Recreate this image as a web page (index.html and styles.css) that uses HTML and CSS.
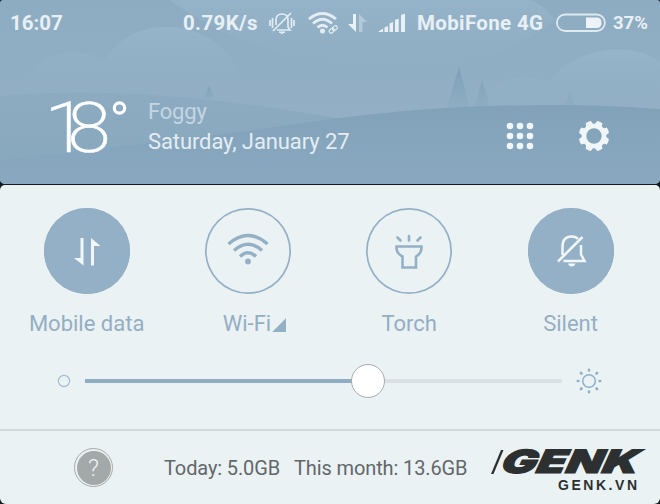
FILE: index.html
```html
<!DOCTYPE html>
<html lang="en">
<head>
<meta charset="utf-8">
<title>Notification shade</title>
<link rel="stylesheet" href="styles.css">
</head>
<body>
<main class="shade">
  <header class="weather">
    <svg class="scene" viewBox="0 0 660 184" preserveAspectRatio="none" aria-hidden="true">
      <defs>
        <linearGradient id="sky" x1="0" y1="0" x2="0" y2="1"><stop offset="0" stop-color="#8dacc1"/><stop offset=".6" stop-color="#92afc5"/></linearGradient>
        <linearGradient id="hill" x1="0" y1="0" x2="0" y2="1"><stop offset="0" stop-color="#81a2b9"/><stop offset="1" stop-color="#8aa9c0"/></linearGradient>
        <linearGradient id="far" x1="0" y1="0" x2="0" y2="1"><stop offset="0" stop-color="#8cabc1"/><stop offset="1" stop-color="#88a8be"/></linearGradient>
        <linearGradient id="cloud" x1="0" y1="0" x2="0" y2="1"><stop offset="0" stop-color="#9ab9ce" stop-opacity=".6"/><stop offset="1" stop-color="#94b1c7" stop-opacity="0"/></linearGradient>
        <linearGradient id="tree" x1="0" y1="0" x2="0" y2="1"><stop offset="0" stop-color="#7c9fb7"/><stop offset="1" stop-color="#8aaac0" stop-opacity=".5"/></linearGradient>
      </defs>
      <rect width="660" height="184" fill="url(#sky)"/>
      <path d="M170 0H530Q545 6 555 20Q490 70 390 75Q250 60 170 0Z" fill="url(#cloud)"/>
      <path d="M28 82C38 48 82 47 105 61C120 34 145 27 168 27C205 27 235 50 246 92Z" fill="url(#cloud)"/>
      <path d="M480 105C489 76 528 71 549 83C568 51 628 37 660 62V108Z" fill="url(#cloud)"/>
      <path d="M209 86L214 98H204Z" fill="url(#tree)"/>
      <path d="M0 96C110 86 230 99 350 120V184H0Z" fill="url(#far)"/>
      <path d="M459 67Q465 86 469 107H447Q453 86 459 67ZM482 80Q487 94 490 107H475Q478 92 482 80ZM570 92L575 106H565Z" fill="url(#tree)"/>
      <path d="M90 150C210 137 280 126 340 118C440 105 560 101 660 109V184H0V160Z" fill="url(#hill)"/>
    </svg>

    <div class="status">
      <span class="clock">16:07</span>
      <span class="speed">0.79K/s</span>
      <svg class="st-bell" width="26" height="24" viewBox="0 0 26 24" fill="none" stroke="#e4edf3" stroke-width="1.700">
        <path d="M1 9V15M3.500 7V17M22.500 7V17M25 9V15M7 14V9Q7 3 13 3Q19 3 19 9V16L21 19H8M4 20L22 2"/><path d="M10 21H16L13 22.500Z" fill="#e4edf3" stroke-width="1"/>
      </svg>
      <svg class="st-wifi" width="31" height="24" viewBox="0 0 31 24" fill="none" stroke="#e4edf3" stroke-width="2.900">
        <path d="M1 8Q14.500 -3 28 8M5 12.500Q14.500 4 24 12.500M9.500 16.500Q14.500 12 19.500 16.500"/><circle cx="14.500" cy="20" r="2.500" fill="#e4edf3" stroke="none"/>
        <g stroke-width="1.200" transform="translate(0 .5) rotate(-40 25 18)"><rect x="20.500" y="16.200" width="5.500" height="3.800" rx="1.900"/><rect x="24.500" y="16.200" width="5.500" height="3.800" rx="1.900"/></g>
      </svg>
      <svg class="st-data" width="20" height="20" viewBox="0 0 20 20"><path d="M8 1V19L0 11H5V1Z" fill="#e9f1f5"/><path d="M11 19V1L19 9H14.500V19Z" fill="#b5cad9"/></svg>
      <svg class="st-signal" width="28" height="20" viewBox="0 0 28 20" fill="#e9f1f5"><path d="M0 19L5 15.500V19ZM6.500 14.500L10 13V19H6.500ZM11.500 10.500L15 9V19H11.500ZM17 7L20.700 5.500V19H17ZM23 2L27 .5V19H23Z"/></svg>
      <span class="carrier">MobiFone 4G</span>
      <svg class="st-battery" width="50" height="20" viewBox="0 0 50 20"><rect x="0" y="1.500" width="48" height="16.500" rx="8.250" transform="translate(.9 0)" fill="none" stroke="#dfe9f0" stroke-width="1.800"/><path d="M30 4.500H40.500Q45.500 4.500 45.500 9.750Q45.500 15 40.500 15H30Z" fill="#edf3f7"/></svg>
      <span class="percent">37%</span>
    </div>

    <div class="forecast">
      <svg class="temp" width="82" height="84" viewBox="0 -10 82 84"><text class="temp-text" transform="translate(-2.500 56) scale(1.120 1)">18</text><circle cx="72.500" cy="12" r="5.200" fill="none" stroke="#fff" stroke-width="3.200"/></svg>
      <div class="when"><span class="condition">Foggy</span><span class="date">Saturday, January 27</span></div>
      <svg class="apps" width="28" height="28" viewBox="0 0 28 28" fill="#f0f5f8"><circle cx="4" cy="4" r="3.300"/><circle cx="14" cy="4" r="3.300"/><circle cx="24" cy="4" r="3.300"/><circle cx="4" cy="14" r="3.300"/><circle cx="14" cy="14" r="3.300"/><circle cx="24" cy="14" r="3.300"/><circle cx="4" cy="24" r="3.300"/><circle cx="14" cy="24" r="3.300"/><circle cx="24" cy="24" r="3.300"/></svg>
      <svg class="gear" width="32" height="32" viewBox="-16 -16 32 32" fill="#f0f5f8"><circle r="10" fill="none" stroke="#f0f5f8" stroke-width="4.600"/><path id="tooth" d="M-4.500 -10.500Q-3.100 -12 -2.900 -15Q0 -15.800 2.900 -15Q3.100 -12 4.500 -10.500Z" transform="rotate(22.500)"/><use href="#tooth" transform="rotate(45)"/><use href="#tooth" transform="rotate(90)"/><use href="#tooth" transform="rotate(135)"/><use href="#tooth" transform="rotate(180)"/><use href="#tooth" transform="rotate(225)"/><use href="#tooth" transform="rotate(270)"/><use href="#tooth" transform="rotate(315)"/></svg>
    </div>
  </header>

  <section class="panel">
    <div class="toggles">
      <div class="toggle">
        <span class="disc on"><svg width="86" height="86" viewBox="0 0 86 86" fill="#f1f7f9"><path d="M39.500 30V57.500L30 50H36.500V30ZM47 57.500V30L56.500 38H50V57.500Z"/></svg></span>
        <span class="label">Mobile data</span>
      </div>
      <div class="toggle">
        <span class="disc"><svg width="86" height="86" viewBox="0 0 86 86" fill="none" stroke="#94b0c6" stroke-width="3.400"><path d="M23.500 36Q43 19 62.500 36M29 42.500Q43 30 57 42.500M35 48.500Q43 41 51 48.500"/><circle cx="43" cy="53.500" r="2.900" fill="#94b0c6" stroke="none"/></svg></span>
        <span class="label wifi">Wi-Fi<i class="corner"></i></span>
      </div>
      <div class="toggle">
        <span class="disc"><svg width="86" height="86" viewBox="0 0 86 86" fill="none" stroke="#94b0c6" stroke-width="2.600"><path d="M30.500 38.500H55.500Q56 45 50 48.500V59.500H36.500V48.500Q30 45 30.500 38.500Z"/><path stroke-linecap="round" d="M43 28V32.500M31.500 29.500L34.500 32.500M54.500 29.500L51.500 32.500"/></svg></span>
        <span class="label">Torch</span>
      </div>
      <div class="toggle">
        <span class="disc on"><svg width="86" height="86" viewBox="0 0 86 86" fill="none" stroke="#f1f7f9" stroke-width="2.500"><path d="M34.500 47V39Q34.500 28.500 43.500 28.500Q48 28.500 50 31M53 37V46.500L56.500 53H35.500M30 53.500L54.500 29"/><path d="M40 55.500H47.500Q46.500 58.500 43.750 58.500Q41 58.500 40 55.500Z" fill="#f1f7f9" stroke="none"/></svg></span>
        <span class="label">Silent</span>
      </div>
    </div>

    <div class="brightness">
      <svg width="14" height="14" viewBox="0 0 14 14"><circle cx="7" cy="7" r="5.600" fill="none" stroke="#a4bbd0" stroke-width="1.200"/></svg>
      <div class="track"><div class="filled"></div><div class="knob"></div></div>
      <svg width="26" height="26" viewBox="0 0 26 26" fill="none" stroke="#8fb0c9" stroke-width="1.500"><circle cx="13" cy="13" r="6.300"/><path stroke-width="2.600" stroke-linecap="round" d="M13 1.800V2.400M13 23.600V24.200M1.800 13H2.400M23.600 13H24.200M4.900 4.900L5.500 5.500M20.500 20.500L21.100 21.100M4.900 21.100L5.500 20.500M20.500 5.500L21.100 4.900"/></svg>
    </div>

    <footer class="usage">
      <span class="help"><span class="help-inner">?</span></span>
      <span class="today">Today: 5.0GB</span>
      <span class="month">This month: 13.6GB</span>
      <svg class="logo" width="158" height="52" viewBox="0 0 158 52" fill="#2d3031">
        <path d="M2 32L12 8H14.500L4.500 32Z"/>
        <text class="brand" transform="translate(11 31) skewX(-12)" textLength="137" lengthAdjust="spacingAndGlyphs">GENK</text>
        <text class="domain" x="69" y="47.500" textLength="79">GENK.VN</text>
      </svg>
    </footer>
  </section>
</main>
</body>
</html>
```
FILE: styles.css
```css
* { box-sizing: border-box; }
body { margin: 0; background: #111a20; font-family: Roboto, "Liberation Sans", sans-serif; }
svg { display: block; flex: none; }
.shade { width: 660px; height: 504px; display: flex; flex-direction: column; gap: 1px; overflow: hidden; }
.weather { position: relative; height: 184px; flex: none; border-radius: 3px 3px 5px 5px; overflow: hidden; }
.scene { position: absolute; inset: 0; width: 100%; height: 100%; }
.status { position: relative; display: flex; align-items: center; height: 46px; padding-left: 10px; color: #e8f0f5; font-size: 20.500px; font-weight: 700; white-space: nowrap; }
.clock { width: 173px; }
.speed { width: 86px; letter-spacing: .35px; }
.st-wifi { margin-left: 13px; }
.st-data { margin-left: 9px; }
.st-signal { margin-left: 10px; }
.carrier { margin-left: 11px; width: 137px; letter-spacing: .35px; }
.st-battery { margin-left: 2px; }
.percent { margin-left: 7px; font-size: 18.500px; }
.forecast { position: relative; display: flex; align-items: center; height: 80px; margin-top: 50px; padding-left: 47px; }
.temp { margin-top: -17px; }
.temp-text { font-size: 70px; font-weight: 200; letter-spacing: -18px; fill: #fff; stroke: #fff; stroke-width: .6px; }
.when { display: flex; flex-direction: column; width: 358px; margin: -19px 0 0 19px; font-size: 22px; line-height: 30px; }
.condition { color: #c4d6e2; letter-spacing: -.2px; }
.date { color: #e4edf3; letter-spacing: -.1px; }
.gear { margin-left: 44px; }
.panel { display: flex; flex-direction: column; flex: 1; background: #ebf2f4; border-radius: 5px 5px 6px 6px; }
.toggles { display: grid; grid-template-columns: repeat(4, 161.300px); padding: 23px 0 0 6px; }
.toggle { display: flex; flex-direction: column; align-items: center; }
.disc { width: 86px; height: 86px; border-radius: 50%; box-shadow: inset 0 0 0 1.700px #94b0c6; }
.on { background: #94b0c6; }
.label { margin-top: 14px; height: 32px; line-height: 32px; font-size: 22px; color: #94aec3; }
.wifi { display: flex; align-items: center; margin-left: 13px; }
.corner { width: 14px; height: 14px; margin: 2px 0 0 1px; background: #94b0c6; clip-path: polygon(100% 0, 100% 100%, 0 100%); }
.brightness { display: flex; align-items: center; height: 54px; margin-top: 14px; padding-left: 57px; }
.track { position: relative; width: 477px; height: 4px; margin: 0 14px; background: #d9e1e4; }
.filled { width: 282px; height: 4px; background: #90adc3; }
.knob { position: absolute; left: 266px; top: -15px; width: 34px; height: 34px; border-radius: 50%; background: #fff; border: 1px solid #a6acb0; }
.usage { display: flex; align-items: center; flex: 1; margin-top: 21px; border-top: 2px solid #d2d9dc; padding-left: 74px; font-size: 20px; color: #62676a; white-space: nowrap; letter-spacing: -.12px; }
.help { display: grid; place-items: center; width: 39px; height: 39px; border: 1.500px solid #a5aaaa; border-radius: 50%; }
.help-inner { display: grid; place-items: center; width: 34px; height: 34px; border-radius: 50%; background: #a3a9a8; color: #edf2f3; font-size: 24px; font-weight: 300; }
.today { width: 130px; margin-left: 51px; }
.month { width: 175px; }
.logo { margin-left: 20px; }
.brand { font: italic 900 32px Inter, "Liberation Sans", sans-serif; letter-spacing: 0; stroke: #2d3031; stroke-width: 1.200px; }
.domain { font: 700 14px "Liberation Sans", Arial, sans-serif; letter-spacing: 0; }
```
